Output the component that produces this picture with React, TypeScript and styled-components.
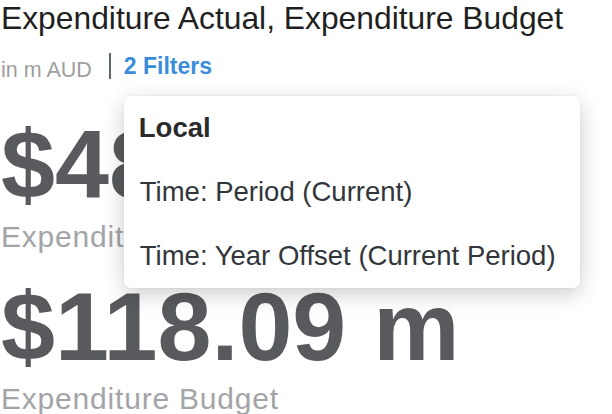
import styled, { createGlobalStyle } from 'styled-components';

const GlobalStyle = createGlobalStyle`
  html, body {
    margin: 0;
    padding: 0;
    background: #ffffff;
  }
  body {
    font-family: "Liberation Sans", Arial, sans-serif;
    overflow: hidden;
  }
`;

const Tile = styled.div`
  width: 612px;
  height: 414px;
  padding-left: 1px;
  box-sizing: border-box;
  display: flex;
  flex-direction: column;
`;

const Title = styled.h1`
  margin: 0;
  font-size: 31.8px;
  line-height: 36px;
  font-weight: 400;
  color: #1f1f1f;
  white-space: nowrap;
`;

const SubHeader = styled.div`
  display: flex;
  align-items: flex-start;
  height: 26px;
  margin-top: 17px;
`;

const Unit = styled.span`
  font-size: 21.5px;
  line-height: 26px;
  padding-top: 3.5px;
  color: #9e9e9e;
`;

const Divider = styled.span`
  width: 2px;
  height: 26px;
  background: #5d6570;
  margin: 0 13px 0 17px;
`;

const FilterAnchor = styled.div`
  position: relative;
`;

const FilterLink = styled.span`
  display: block;
  font-size: 23px;
  line-height: 26px;
  font-weight: 700;
  color: #3a8dd9;
  white-space: nowrap;
`;

const Popover = styled.div`
  position: absolute;
  top: calc(100% + 17px);
  left: 0;
  width: 456px;
  background: #ffffff;
  border-radius: 7px;
  box-shadow: 0 6px 22px rgba(0, 0, 0, 0.2), 0 0 3px rgba(0, 0, 0, 0.06);
  z-index: 10;
`;

const PopoverItem = styled.div<{ $heading?: boolean }>`
  padding: 0 16px 0 ${(p) => (p.$heading ? '15px' : '16px')};
  font-size: ${(p) => (p.$heading ? '27.5px' : '27.5px')};
  line-height: 64px;
  font-weight: ${(p) => (p.$heading ? 700 : 400)};
  color: ${(p) => (p.$heading ? '#2b2b2b' : '#32363a')};
  white-space: nowrap;
`;

const Kpis = styled.div`
  display: flex;
  flex-direction: column;
  gap: 23px;
  margin-top: 37px;
`;

const Kpi = styled.div`
  display: flex;
  flex-direction: column;
  gap: 6px;
`;

const Value = styled.div`
  font-size: 97px;
  line-height: 97px;
  font-weight: 700;
  color: #595a5d;
  white-space: nowrap;
`;

const Label = styled.div`
  font-size: 30px;
  line-height: 36px;
  letter-spacing: 0.8px;
  color: #a3a4a8;
  white-space: nowrap;
`;

const filters = ['Time: Period (Current)', 'Time: Year Offset (Current Period)'];

const kpis = [
  { value: '$48.52 m', label: 'Expenditure Actual' },
  { value: '$118.09 m', label: 'Expenditure Budget' },
];

export default function App() {
  return (
    <>
      <GlobalStyle />
      <Tile>
        <Title>Expenditure Actual, Expenditure Budget</Title>
        <SubHeader>
          <Unit>in m AUD</Unit>
          <Divider />
          <FilterAnchor>
            <FilterLink>2 Filters</FilterLink>
            <Popover>
              <PopoverItem $heading>Local</PopoverItem>
              {filters.map((f) => (
                <PopoverItem key={f}>{f}</PopoverItem>
              ))}
            </Popover>
          </FilterAnchor>
        </SubHeader>
        <Kpis>
          {kpis.map((k) => (
            <Kpi key={k.label}>
              <Value>{k.value}</Value>
              <Label>{k.label}</Label>
            </Kpi>
          ))}
        </Kpis>
      </Tile>
    </>
  );
}
